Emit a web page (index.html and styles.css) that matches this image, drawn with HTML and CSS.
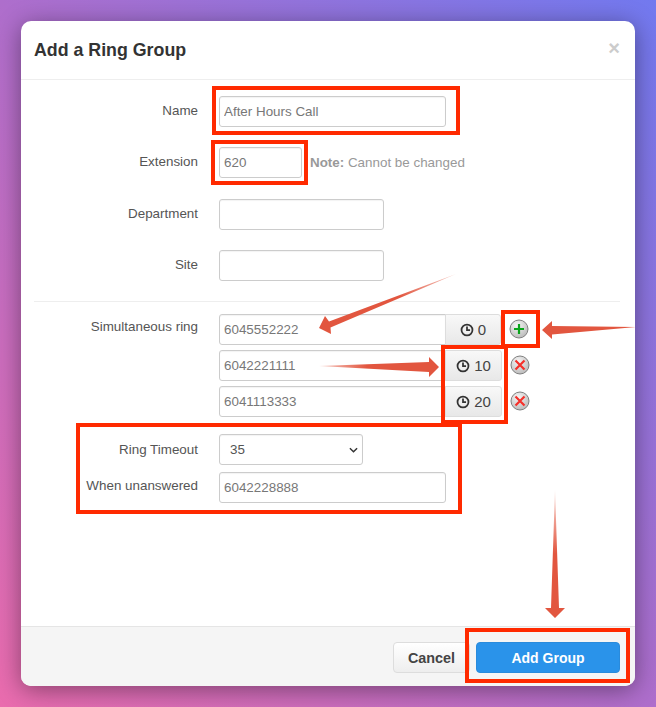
FILE: index.html
```html
<!DOCTYPE html>
<html lang="en">
<head>
  <meta charset="UTF-8">
  <title>Add a Ring Group</title>
  <link rel="stylesheet" href="styles.css">
</head>
<body>
  <div class="modal">
    <div class="modal-header">
      <h3>Add a Ring Group</h3>
      <span class="close">&times;</span>
    </div>

    <div class="modal-body">
      <div class="row">
        <label>Name</label>
        <input class="input input-wide" type="text" value="After Hours Call">
      </div>
      <div class="row">
        <label>Extension</label>
        <input class="input input-ext" type="text" value="620">
        <span class="note"><b>Note:</b> Cannot be changed</span>
      </div>
      <div class="row">
        <label>Department</label>
        <input class="input input-mid" type="text">
      </div>
      <div class="row">
        <label>Site</label>
        <input class="input input-mid" type="text">
      </div>

      <hr class="divider">

      <div class="row row-tight row-sim">
        <label>Simultaneous ring</label>
        <input class="input input-wide input-joined" type="text" value="6045552222">
        <button class="btn-delay btn-delay-short">
          <svg class="clock" viewBox="0 0 12 12"><circle cx="6" cy="6" r="4.7"/><path d="M6 3v3.2h2.6"/></svg>0
        </button>
        <svg class="round-icon" viewBox="0 0 20 20"><use href="#round"/><path class="plus" d="M10 5v10M5 10h10"/></svg>
      </div>
      <div class="row row-tight">
        <label></label>
        <input class="input input-wide input-joined" type="text" value="6042221111">
        <button class="btn-delay">
          <svg class="clock" viewBox="0 0 12 12"><circle cx="6" cy="6" r="4.7"/><path d="M6 3v3.2h2.6"/></svg>10
        </button>
        <svg class="round-icon" viewBox="0 0 20 20"><use href="#round"/><path class="cross" d="M5.500 5.500l9 9M14.500 5.500l-9 9"/></svg>
      </div>
      <div class="row row-tight row-last">
        <label></label>
        <input class="input input-wide input-joined" type="text" value="6041113333">
        <button class="btn-delay">
          <svg class="clock" viewBox="0 0 12 12"><circle cx="6" cy="6" r="4.7"/><path d="M6 3v3.2h2.6"/></svg>20
        </button>
        <svg class="round-icon" viewBox="0 0 20 20"><use href="#round"/><path class="cross" d="M5.500 5.500l9 9M14.500 5.500l-9 9"/></svg>
      </div>

      <div class="row row-ring">
        <label>Ring Timeout</label>
        <div class="select-wrap">
          <select class="input select">
            <option>35</option>
          </select>
          <svg class="chevron" viewBox="0 0 10 6"><path d="M1 1l4 4 4-4"/></svg>
        </div>
      </div>
      <div class="row row-unanswered">
        <label>When unanswered</label>
        <input class="input input-wide" type="text" value="6042228888">
      </div>
    </div>

    <div class="modal-footer">
      <button class="btn-cancel">Cancel</button>
      <button class="btn-primary">Add Group</button>
    </div>
  </div>

  <!-- red markup drawn on top of the dialog -->
  <svg class="markup" viewBox="0 0 656 707">
    <defs>
      <radialGradient id="roundFill" cx="0.4" cy="0.3" r="0.8">
        <stop offset="0" stop-color="#f6f6f6"/>
        <stop offset="1" stop-color="#b4b4b4"/>
      </radialGradient>
      <symbol id="round" viewBox="0 0 20 20">
        <circle cx="10" cy="10" r="9" fill="url(#roundFill)" stroke="#808080" stroke-width="1"/>
      </symbol>
      <linearGradient id="fadeA" x1="1" y1="0" x2="0" y2="1">
        <stop offset="0" stop-color="#e2563f" stop-opacity="0.3"/>
        <stop offset="0.4" stop-color="#e2563f"/>
      </linearGradient>
      <linearGradient id="fadeB" x1="0" y1="0" x2="1" y2="0">
        <stop offset="0" stop-color="#e2563f" stop-opacity="0.3"/>
        <stop offset="0.4" stop-color="#e2563f"/>
      </linearGradient>
      <linearGradient id="fadeC" x1="0" y1="0" x2="0" y2="1">
        <stop offset="0" stop-color="#e2563f" stop-opacity="0.2"/>
        <stop offset="0.5" stop-color="#e2563f"/>
      </linearGradient>
    </defs>
    <rect class="box" x="214" y="88" width="244" height="45"/>
    <rect class="box" x="213" y="142" width="93" height="41"/>
    <rect class="box" x="503" y="312" width="35" height="34"/>
    <rect class="box" x="443" y="347" width="63" height="75"/>
    <rect class="box" x="78" y="425" width="382" height="87"/>
    <rect class="box" x="467" y="630" width="161" height="51"/>
    <path fill="url(#fadeA)" d="M456 274L329 321.500L325 316L319 328L331 334L330.500 327.500Z"/>
    <path fill="#e2563f" d="M636 327L552 326L552 321L542 330L552 339L552 334.500Z"/>
    <path fill="url(#fadeB)" d="M319 366L429 362L429 357L439 367L429 377L429 372Z"/>
    <path fill="url(#fadeC)" d="M555 490L551 608L545 608L555 618L565 608L559 608Z"/>
  </svg>
</body>
</html>
```

FILE: styles.css
```css
* {
  box-sizing: border-box;
}

html, body {
  height: 100%;
}

body {
  margin: 0;
  padding: 21px;
  overflow: hidden;
  background: linear-gradient(to bottom left, #7279ef, #ae6ecc 50%, #ea6cae);
  font-family: "Liberation Sans", Arial, sans-serif;
  font-size: 13.4px;
  color: #555;
}

.modal {
  display: flex;
  flex-direction: column;
  width: 614px;
  height: 665px;
  background: #fff;
  border-radius: 10px;
  box-shadow: 0 4px 24px rgba(0, 0, 0, 0.4);
  overflow: hidden;
}

.modal-header {
  display: flex;
  justify-content: space-between;
  height: 59px;
  padding: 19px 15px 0 13px;
  border-bottom: 1px solid #eee;
}

.modal-header h3 {
  margin: 0;
  font-size: 17.8px;
  line-height: 20px;
  color: #333;
}

.close {
  font-size: 20px;
  font-weight: bold;
  line-height: 8px;
  padding-top: 4px;
  color: #ccc;
}

.modal-body {
  flex: 1;
  padding: 16px 15px 0 13px;
}

.row {
  display: flex;
  align-items: flex-start;
  margin-bottom: 20.3px;
}

.row-tight {
  margin-bottom: 5px;
}

.row-last {
  margin-bottom: 17px;
}

.row-ring {
  margin-bottom: 7px;
}

.row label {
  flex: none;
  width: 164px;
  margin-right: 21px;
  padding-top: 7px;
  text-align: right;
  line-height: 16px;
  color: #555;
}

.row-sim label {
  padding-top: 5px;
}

.row-ring label,
.row-unanswered label {
  padding-top: 8px;
}

.row-unanswered label {
  padding-top: 6px;
}

.input {
  height: 31px;
  padding: 0 4px;
  border: 1px solid #ccc;
  border-radius: 3px;
  background: #fff;
  box-shadow: inset 0 1px 1px rgba(0, 0, 0, 0.05);
  font-family: inherit;
  font-size: 13.4px;
  color: #777;
}

.input-wide {
  width: 227px;
}

.input-ext {
  width: 83px;
}

.input-mid {
  width: 165px;
}

.input-joined {
  border-radius: 3px 0 0 3px;
}

.note {
  margin-left: 8px;
  padding-top: 8px;
  line-height: 16px;
  color: #999;
}

.divider {
  height: 1px;
  margin: 1px 0 12px;
  border: none;
  background: #eee;
}

.btn-delay {
  display: flex;
  align-items: center;
  justify-content: center;
  gap: 4px;
  width: 57px;
  height: 31px;
  margin-left: -1px;
  padding: 0;
  border: 1px solid #ddd;
  border-radius: 0 3px 3px 0;
  background: linear-gradient(#f8f8f8, #e8e8e8);
  font-family: inherit;
  font-size: 15px;
  color: #444;
}

.btn-delay-short {
  width: 56px;
}

.clock {
  width: 14px;
  height: 14px;
  fill: none;
  stroke: #333;
  stroke-width: 1.5;
}

.round-icon {
  flex: none;
  width: 20px;
  height: 20px;
  margin: 5px 0 0 8px;
}

.plus {
  fill: none;
  stroke: #0aa51c;
  stroke-width: 2.2;
}

.cross {
  fill: none;
  stroke: #f5302a;
  stroke-width: 2.2;
}

.select-wrap {
  position: relative;
  width: 144px;
}

.select {
  display: block;
  width: 100%;
  padding-left: 10px;
  appearance: none;
  color: #555;
}

.chevron {
  position: absolute;
  right: 5px;
  top: 13px;
  width: 9px;
  height: 6px;
  fill: none;
  stroke: #333;
  stroke-width: 1.6;
}

.modal-footer {
  display: flex;
  justify-content: flex-end;
  align-items: flex-start;
  gap: 6px;
  height: 60px;
  padding: 15px 15px 0 0;
  border-top: 1px solid #e5e5e5;
  background: #f5f5f5;
}

.btn-cancel,
.btn-primary {
  height: 31px;
  border-radius: 4px;
  font-family: inherit;
  font-size: 14px;
  font-weight: bold;
}

.btn-cancel {
  width: 77px;
  border: 1px solid #ddd;
  background: linear-gradient(#fff, #eee);
  font-size: 14.4px;
  color: #444;
}

.btn-primary {
  width: 144px;
  border: 1px solid #2a8bdc;
  background: #2a93ea;
  color: #fff;
}

.markup {
  position: absolute;
  left: 0;
  top: 0;
  width: 656px;
  height: 707px;
  pointer-events: none;
}

.box {
  fill: none;
  stroke: #ff2a00;
  stroke-width: 4;
}
```
